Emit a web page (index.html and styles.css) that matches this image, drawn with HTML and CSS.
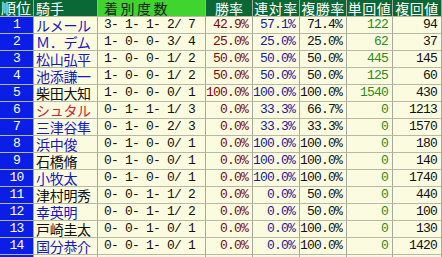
FILE: index.html
```html
<!DOCTYPE html>
<html lang="ja">
<head>
<meta charset="utf-8">
<link rel="stylesheet" href="styles.css">
</head>
<body>
<table class="stats">
  <colgroup>
    <col class="c-rank"><col class="c-name"><col class="c-rec"><col class="c-pct"><col class="c-pct"><col class="c-pct"><col class="c-win"><col class="c-plc">
  </colgroup>
  <thead>
    <tr>
      <th class="h-rank">順位</th>
      <th class="h-name">騎手</th>
      <th class="h-rec">着別度数</th>
      <th>勝率</th>
      <th class="h-wide">連対率</th>
      <th class="h-wide">複勝率</th>
      <th class="h-wide">単回値</th>
      <th class="h-wide">複回値</th>
    </tr>
  </thead>
  <tbody>
    <tr><td class="rank">1</td><td class="name blue">ルメール</td><td class="rec">3- 1- 1- 2/ 7</td><td class="num win">42.9%</td><td class="num ren">57.1%</td><td class="num">71.4%</td><td class="num tan">122</td><td class="num">94</td></tr>
    <tr><td class="rank">2</td><td class="name blue">Ｍ．デム</td><td class="rec">1- 0- 0- 3/ 4</td><td class="num win">25.0%</td><td class="num ren">25.0%</td><td class="num">25.0%</td><td class="num tan">62</td><td class="num">37</td></tr>
    <tr><td class="rank">3</td><td class="name blue">松山弘平</td><td class="rec">1- 0- 0- 1/ 2</td><td class="num win">50.0%</td><td class="num ren">50.0%</td><td class="num">50.0%</td><td class="num tan">445</td><td class="num">145</td></tr>
    <tr><td class="rank">4</td><td class="name blue">池添謙一</td><td class="rec">1- 0- 0- 1/ 2</td><td class="num win">50.0%</td><td class="num ren">50.0%</td><td class="num">50.0%</td><td class="num tan">125</td><td class="num">60</td></tr>
    <tr><td class="rank">5</td><td class="name">柴田大知</td><td class="rec">1- 0- 0- 0/ 1</td><td class="num win">100.0%</td><td class="num ren">100.0%</td><td class="num">100.0%</td><td class="num tan">1540</td><td class="num">430</td></tr>
    <tr><td class="rank">6</td><td class="name red">シュタル</td><td class="rec">0- 1- 1- 1/ 3</td><td class="num win">0.0%</td><td class="num ren">33.3%</td><td class="num">66.7%</td><td class="num tan">0</td><td class="num">1213</td></tr>
    <tr><td class="rank">7</td><td class="name blue">三津谷隼</td><td class="rec">0- 1- 0- 2/ 3</td><td class="num win">0.0%</td><td class="num ren">33.3%</td><td class="num">33.3%</td><td class="num tan">0</td><td class="num">1570</td></tr>
    <tr><td class="rank">8</td><td class="name blue">浜中俊</td><td class="rec">0- 1- 0- 0/ 1</td><td class="num win">0.0%</td><td class="num ren">100.0%</td><td class="num">100.0%</td><td class="num tan">0</td><td class="num">180</td></tr>
    <tr><td class="rank">9</td><td class="name">石橋脩</td><td class="rec">0- 1- 0- 0/ 1</td><td class="num win">0.0%</td><td class="num ren">100.0%</td><td class="num">100.0%</td><td class="num tan">0</td><td class="num">140</td></tr>
    <tr><td class="rank">10</td><td class="name blue">小牧太</td><td class="rec">0- 1- 0- 0/ 1</td><td class="num win">0.0%</td><td class="num ren">100.0%</td><td class="num">100.0%</td><td class="num tan">0</td><td class="num">1740</td></tr>
    <tr><td class="rank">11</td><td class="name">津村明秀</td><td class="rec">0- 0- 1- 1/ 2</td><td class="num win">0.0%</td><td class="num ren">0.0%</td><td class="num">50.0%</td><td class="num tan">0</td><td class="num">440</td></tr>
    <tr><td class="rank">12</td><td class="name blue">幸英明</td><td class="rec">0- 0- 1- 1/ 2</td><td class="num win">0.0%</td><td class="num ren">0.0%</td><td class="num">50.0%</td><td class="num tan">0</td><td class="num">100</td></tr>
    <tr><td class="rank">13</td><td class="name">戸崎圭太</td><td class="rec">0- 0- 1- 0/ 1</td><td class="num win">0.0%</td><td class="num ren">0.0%</td><td class="num">100.0%</td><td class="num tan">0</td><td class="num">130</td></tr>
    <tr><td class="rank">14</td><td class="name blue">国分恭介</td><td class="rec">0- 0- 1- 0/ 1</td><td class="num win">0.0%</td><td class="num ren">0.0%</td><td class="num">100.0%</td><td class="num tan">0</td><td class="num">1420</td></tr>
    <tr><td class="rank"></td><td class="name"></td><td class="rec"></td><td class="num"></td><td class="num"></td><td class="num"></td><td class="num"></td><td class="num"></td></tr>
  </tbody>
</table>
</body>
</html>
```

FILE: styles.css
```css
html, body {
  margin: 0;
  padding: 0;
  background: #ffffff;
}

.stats {
  border-collapse: separate;
  border-spacing: 0;
  table-layout: fixed;
  width: 442px;
  font-family: "Noto Sans CJK JP", sans-serif;
}

.c-rank { width: 34px; }
.c-name { width: 64px; }
.c-rec { width: 108px; }
.c-pct { width: 47px; }
.c-win { width: 46px; }
.c-plc { width: 49px; }

.stats th,
.stats td {
  box-sizing: border-box;
  height: 17px;
  padding: 0;
  border-right: 1px solid #a9a99a;
  border-bottom: 1px solid #b8b8a8;
  line-height: 16px;
  white-space: pre;
}

.stats th {
  background: #0a6837;
  color: #ffffff;
  font-weight: normal;
  font-size: 14px;
  text-align: center;
}

.stats th.h-rank {
  text-align: left;
  padding-left: 1px;
  font-size: 15px;
}

.stats th.h-name {
  text-align: left;
  padding-left: 2px;
}

.stats th.h-rec {
  background: #3fd42e;
  color: #1a1a1a;
  text-align: left;
  padding-left: 6px;
  letter-spacing: 2.5px;
}

.stats th.h-wide {
  letter-spacing: 0.5px;
}

.stats td {
  background: #fbfbdf;
  color: #111111;
}

.stats td.rank {
  background: #0a1ee6;
  color: #ffffff;
  text-align: center;
  font-family: "Liberation Mono", monospace;
  font-size: 13px;
  letter-spacing: -0.8px;
}

.stats td.name {
  font-size: 14px;
  padding-left: 2px;
  letter-spacing: -0.3px;
}

.name.blue { color: #1616c4; }
.name.red { color: #d42034; }

.stats td.rec {
  font-family: "Liberation Mono", monospace;
  font-size: 13px;
  letter-spacing: -0.8px;
  padding-left: 6px;
}

.stats td.num {
  font-family: "Liberation Mono", monospace;
  font-size: 13px;
  letter-spacing: -0.8px;
  text-align: right;
  padding-right: 4px;
}

.num.win { color: #7a0a0a; }
.num.ren { color: #1a1a9a; }
.num.tan { color: #2c8a1c; }
```
